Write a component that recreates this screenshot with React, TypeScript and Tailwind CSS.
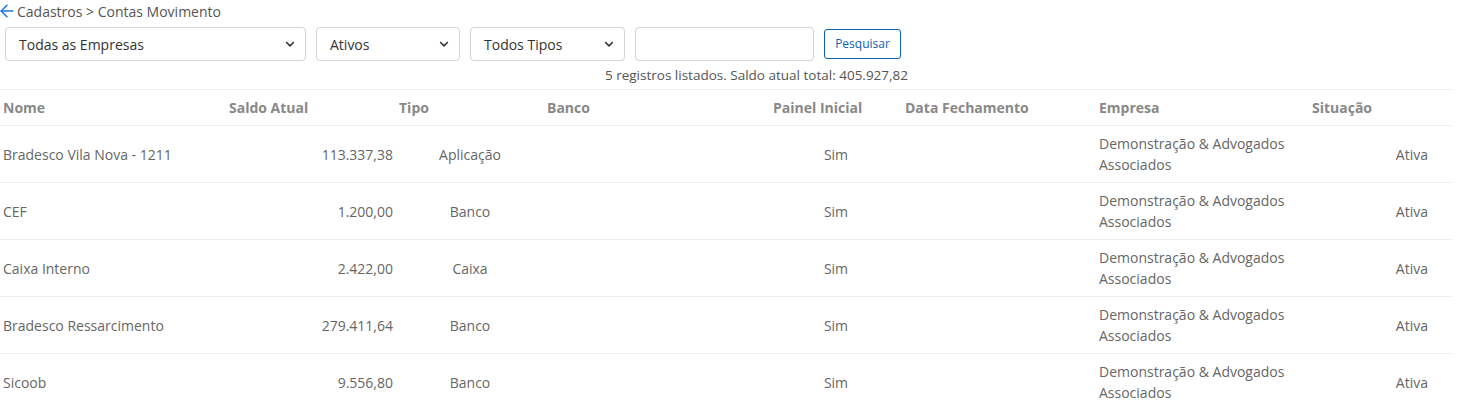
import { ArrowLeft } from "lucide-react";

interface Conta {
  nome: string;
  saldo: string;
  tipo: string;
  painel: string;
  empresa: string;
  situacao: string;
}

const contas: Conta[] = [
  { nome: "Bradesco Vila Nova - 1211", saldo: "113.337,38", tipo: "Aplicação", painel: "Sim", empresa: "Demonstração & Advogados Associados", situacao: "Ativa" },
  { nome: "CEF", saldo: "1.200,00", tipo: "Banco", painel: "Sim", empresa: "Demonstração & Advogados Associados", situacao: "Ativa" },
  { nome: "Caixa Interno", saldo: "2.422,00", tipo: "Caixa", painel: "Sim", empresa: "Demonstração & Advogados Associados", situacao: "Ativa" },
  { nome: "Bradesco Ressarcimento", saldo: "279.411,64", tipo: "Banco", painel: "Sim", empresa: "Demonstração & Advogados Associados", situacao: "Ativa" },
  { nome: "Sicoob", saldo: "9.556,80", tipo: "Banco", painel: "Sim", empresa: "Demonstração & Advogados Associados", situacao: "Ativa" },
];

function Select({ label, width }: { label: string; width: string }) {
  return (
    <div className={`${width} h-[34px] flex items-center justify-between pl-[13px] pr-[9px] border border-[#ced4da] rounded-[4px] bg-white text-[14px] text-[#333]`}>
      <span>{label}</span>
      <svg width="12" height="12" viewBox="0 0 16 16" fill="none" stroke="#343a40" strokeWidth="2.2" strokeLinecap="round" strokeLinejoin="round">
        <path d="M3.5 6l4.5 4.5L12.5 6" />
      </svg>
    </div>
  );
}

export default function App() {
  return (
    <div className="w-[1472px] h-[408px] overflow-hidden bg-white text-[#666]" style={{ fontFamily: '"Open Sans", "Noto Sans", sans-serif' }}>
      {/* Breadcrumb */}
      <div className="flex items-center h-[22px] text-[14px] text-[#555]">
        <ArrowLeft size={20} strokeWidth={1.8} className="text-[#1a73e8] ml-[-3px]" />
        <span className="ml-[0px]">Cadastros &gt; Contas Movimento</span>
      </div>

      {/* Filtros */}
      <div className="flex items-center gap-[10px] pl-[5px] mt-[5px]">
        <Select label="Todas as Empresas" width="w-[301px]" />
        <Select label="Ativos" width="w-[144px]" />
        <Select label="Todos Tipos" width="w-[155px]" />
        <div className="w-[179px] h-[34px] border border-[#ced4da] rounded-[4px] bg-white" />
        <button className="w-[77px] h-[30px] border border-[#0d5fb5] rounded-[3px] text-[12px] text-[#0d5fb5] bg-white">
          Pesquisar
        </button>
      </div>
      <div className="w-[908px] mt-[4px] text-right text-[13.5px] text-[#555] leading-[20px]">
        5 registros listados. Saldo atual total: 405.927,82
      </div>

      {/* Tabela */}
      <table className="mt-[4px] w-[1452px] table-fixed border-collapse text-[14px]">
        <colgroup>
          <col className="w-[226px]" />
          <col className="w-[170px]" />
          <col className="w-[148px]" />
          <col className="w-[226px]" />
          <col className="w-[132px]" />
          <col className="w-[194px]" />
          <col className="w-[213px]" />
          <col className="w-[143px]" />
        </colgroup>
        <thead>
          <tr className="h-[36px] border-t border-b border-[#eeeeee] text-[#888] font-bold text-left">
            <th className="px-[3px]">Nome</th>
            <th className="px-[3px]">Saldo Atual</th>
            <th className="px-[3px]">Tipo</th>
            <th className="px-[3px]">Banco</th>
            <th className="px-[3px]">Painel Inicial</th>
            <th className="px-[3px]">Data Fechamento</th>
            <th className="px-[3px]">Empresa</th>
            <th className="px-[3px]">Situação</th>
          </tr>
        </thead>
        <tbody>
          {contas.map((c) => (
            <tr key={c.nome} className="h-[57px] border-b border-[#eeeeee]">
              <td className="px-[3px]">{c.nome}</td>
              <td className="px-[3px] text-right">{c.saldo}</td>
              <td className="px-[3px] text-center">{c.tipo}</td>
              <td className="px-[3px]"></td>
              <td className="px-[3px] text-center">{c.painel}</td>
              <td className="px-[3px]"></td>
              <td className="px-[3px] leading-[21px]">{c.empresa}</td>
              <td className="pr-[24px] text-right">{c.situacao}</td>
            </tr>
          ))}
        </tbody>
      </table>
    </div>
  );
}
